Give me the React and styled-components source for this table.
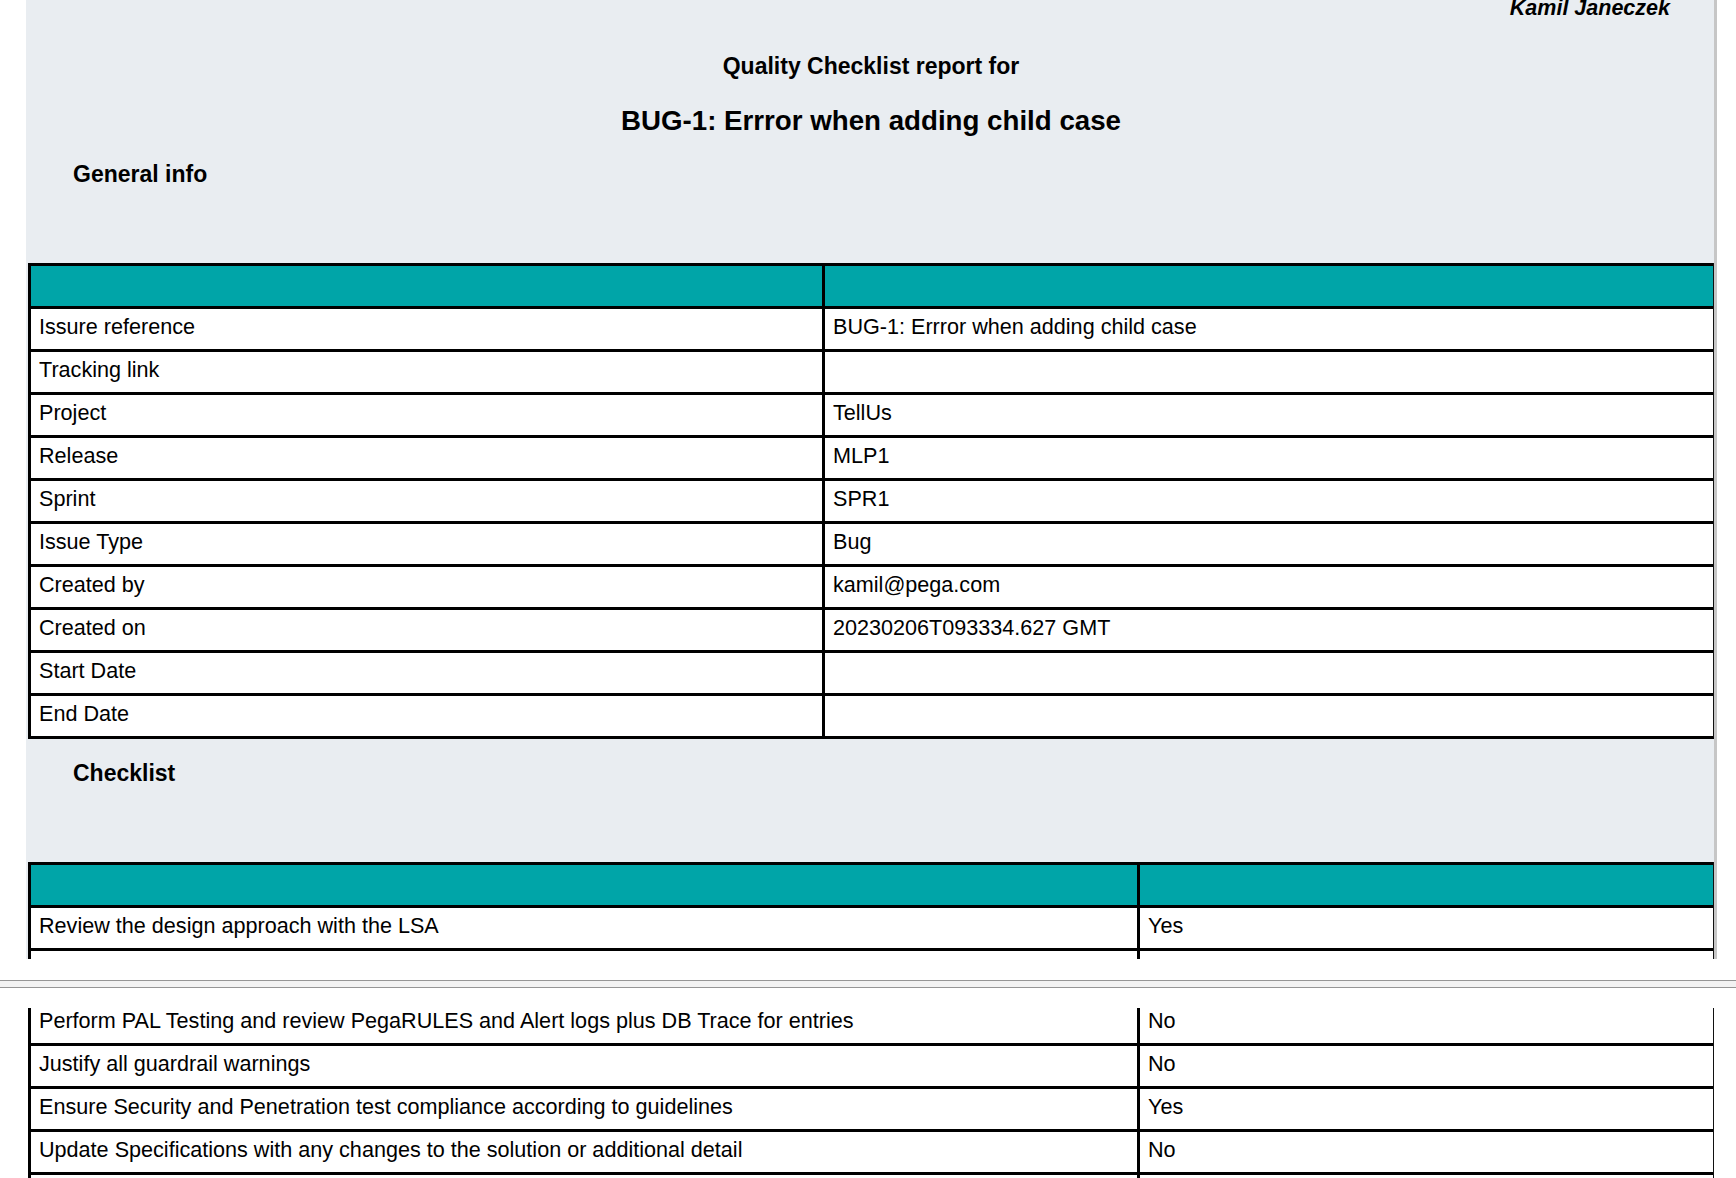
import React from 'react'
import styled, { createGlobalStyle } from 'styled-components'

const generalInfo = [
  ['Issure reference', 'BUG-1: Errror when adding child case'],
  ['Tracking link', ''],
  ['Project', 'TellUs'],
  ['Release', 'MLP1'],
  ['Sprint', 'SPR1'],
  ['Issue Type', 'Bug'],
  ['Created by', 'kamil@pega.com'],
  ['Created on', '20230206T093334.627 GMT'],
  ['Start Date', ''],
  ['End Date', ''],
]

// the row split by the page break only shows its top border on page 1
const checklistTop = [
  ['Review the design approach with the LSA', 'Yes'],
  ['', ''],
]

const checklistRest = [
  ['Perform PAL Testing and review PegaRULES and Alert logs plus DB Trace for entries', 'No'],
  ['Justify all guardrail warnings', 'No'],
  ['Ensure Security and Penetration test compliance according to guidelines', 'Yes'],
  ['Update Specifications with any changes to the solution or additional detail', 'No'],
  ['', ''],
]

export default function App() {
  return (
    <Viewer>
      <GlobalStyle />
      <Page $tone="grey" $height={959}>
        <Author>Kamil Janeczek</Author>
        <Subtitle>Quality Checklist report for</Subtitle>
        <Title>BUG-1: Errror when adding child case</Title>

        <SectionHeading $top={23.5}>General info</SectionHeading>
        <Table>
          <Row $split={794} $head>
            <Cell />
            <Cell />
          </Row>
          {generalInfo.map(([label, value]) => (
            <Row key={label} $split={794}>
              <Cell>{label}</Cell>
              <Cell>{value}</Cell>
            </Row>
          ))}
        </Table>

        <SectionHeading $top={20}>Checklist</SectionHeading>
        <Table>
          <Row $split={1109} $head>
            <Cell />
            <Cell />
          </Row>
          {checklistTop.map(([item, answer], i) => (
            <Row key={i} $split={1109}>
              <Cell>{item}</Cell>
              <Cell>{answer}</Cell>
            </Row>
          ))}
        </Table>
      </Page>

      <PageBreak />

      <Page $tone="white" $height={170}>
        <Table $cutTop={8}>
          {checklistRest.map(([item, answer], i) => (
            <Row key={i} $split={1109}>
              <Cell>{item}</Cell>
              <Cell>{answer}</Cell>
            </Row>
          ))}
        </Table>
      </Page>
    </Viewer>
  )
}

const GlobalStyle = createGlobalStyle`
  html, body {
    margin: 0;
    padding: 0;
    background: #fff;
  }
  body {
    font-family: "Liberation Sans", Arial, sans-serif;
    color: #000;
    overflow: hidden;
  }
`

const Viewer = styled.div`
  width: 1736px;
  height: 1178px;
  overflow: hidden;
  display: flex;
  flex-direction: column;
  background: #fff;
`

const Page = styled.section`
  flex-shrink: 0;
  margin-left: 26px;
  padding-left: 2px;
  width: 1686px;
  height: ${p => p.$height}px;
  overflow: hidden;
  background: ${p => (p.$tone === 'grey' ? '#e9edf1' : '#fff')};
  border-right: ${p => (p.$tone === 'grey' ? '3px solid #c6c6c6' : '0')};
`

const Author = styled.div`
  margin-top: -4.5px;
  padding-right: 44px;
  text-align: right;
  font-size: 21.5px;
  line-height: 24px;
  font-weight: 700;
  font-style: italic;
`

const Subtitle = styled.div`
  margin-top: 32px;
  text-align: center;
  font-size: 23px;
  line-height: 28px;
  font-weight: 700;
`

const Title = styled.h1`
  margin: 25px 0 0;
  text-align: center;
  font-size: 27.7px;
  line-height: 32px;
  font-weight: 700;
`

const SectionHeading = styled.h2`
  margin: ${p => p.$top}px 0 75px;
  padding-left: 45px;
  font-size: 23px;
  line-height: 28px;
  font-weight: 700;
`

const Table = styled.div`
  margin-top: ${p => (p.$cutTop ? -p.$cutTop : 0)}px;
  border-left: 3px solid #000;
  border-right: 1px solid #111;
  border-bottom: 3px solid #000;
  background: #fff;
`

const Row = styled.div`
  display: grid;
  grid-template-columns: ${p => p.$split}px 1fr;
  height: 43px;
  box-sizing: border-box;
  border-top: 3px solid #000;
  background: ${p => (p.$head ? '#00a5a8' : '#fff')};
`

const Cell = styled.div`
  box-sizing: border-box;
  height: 40px;
  padding: 6px 8px 0;
  font-size: 21.6px;
  line-height: 24px;
  white-space: nowrap;
  overflow: hidden;

  &:first-child {
    border-right: 3px solid #000;
  }
`

const PageBreak = styled.div`
  flex-shrink: 0;
  margin: 21px 0 20px;
  height: 8px;
  box-sizing: border-box;
  border-top: 1px solid #959595;
  border-bottom: 1px solid #959595;
  background: #f2f2f2;
`
